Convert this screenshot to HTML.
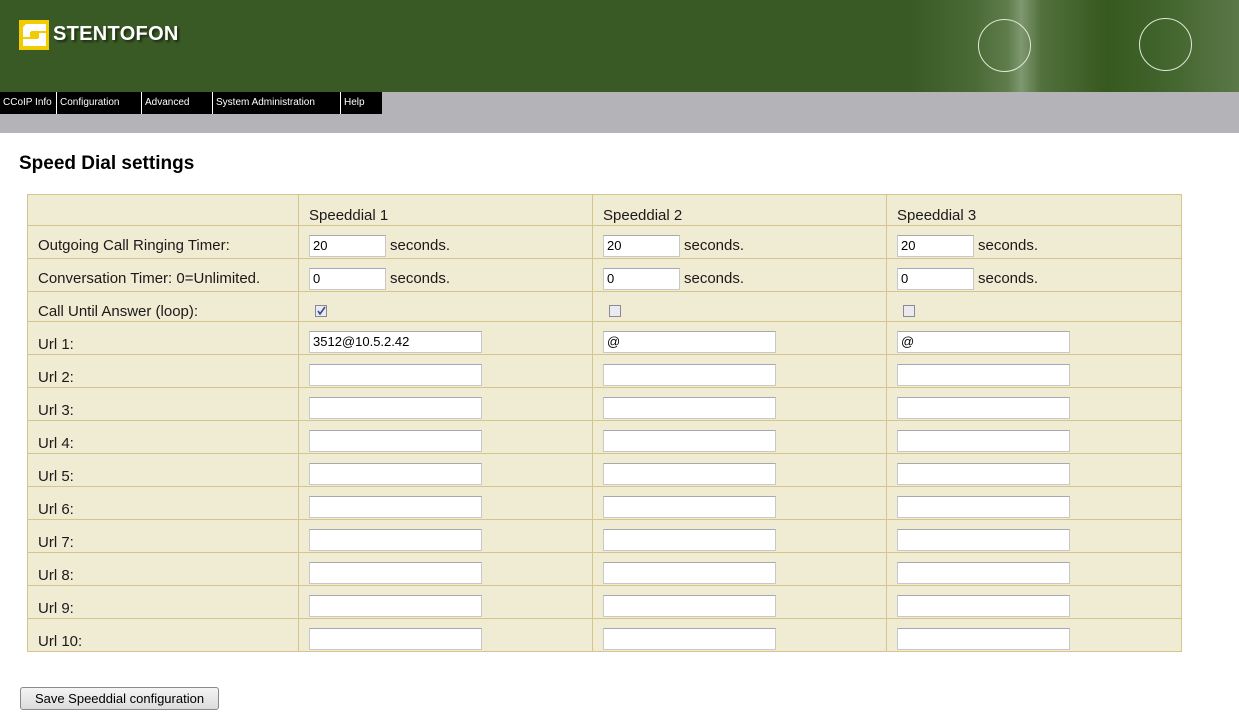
<!DOCTYPE html>
<html><head><style>
*{box-sizing:border-box}
body{margin:0;width:1239px;height:718px;position:relative;background:#fff;font-family:"Liberation Sans",Arial,sans-serif;overflow:hidden}
.hdr{position:absolute;left:0;top:0;width:1239px;height:92px;background:#3a5a25}
.photo{position:absolute;right:0;top:0;width:330px;height:92px;background:linear-gradient(90deg,#3a5a25 0%,#4a6b36 20%,#5f7d4c 30%,#7f9870 34%,#52713d 40%,#36591f 60%,#44662f 80%,#5a7848 100%)}
.circ{position:absolute;border:1.5px solid #dfe8d6;border-radius:50%}
.lt{position:absolute;left:53px;top:23px;color:#fff;font-weight:bold;font-size:20px;text-shadow:2px 2px 2px #1d2d12;letter-spacing:0.3px}
.nav{position:absolute;left:0;top:92px;width:1239px;height:41px;background:#b4b4b8}
.nav a{position:absolute;top:0;height:22px;background:#000;color:#fff;font-size:10px;line-height:22px;padding-left:3px;border-right:1px solid #fff;white-space:nowrap;overflow:hidden}
h1{position:absolute;left:19px;top:153px;margin:0;font-size:19px;font-weight:bold;color:#000}
.tbl{position:absolute;left:27px;top:194px;width:1155px;height:458px;background:#f0ebd3;border:1px solid #d6c48c}
.h{position:absolute;left:0;width:1153px;height:1px;background:#d6c48c}
.v{position:absolute;top:0;width:1px;height:456px;background:#d6c48c}
.t{position:absolute;font-size:15px;color:#1a1a1a;white-space:nowrap}
.in{position:absolute;background:#fff;border:1px solid #c8c8c8;border-top-color:#a8a8b0;font-size:13px;padding-left:3px;line-height:19px;color:#000}
.cb{position:absolute;width:12px;height:12px;border:1px solid #8a8a96;background:#eaeaf0}
.btn{position:absolute;left:20px;top:687px;width:199px;height:23px;border:1px solid #8a8a8a;border-radius:3px;background:linear-gradient(#f4f4f4,#dcdcdc);font-size:13px;line-height:21px;text-align:center;color:#000}
</style></head><body>
<div class="hdr">
 <div class="photo">
  <div class="circ" style="left:69px;top:19px;width:53px;height:53px"></div>
  <div class="circ" style="left:230px;top:18px;width:53px;height:53px"></div>
 </div>
 <svg style="position:absolute;left:19px;top:20px" width="30" height="30"><rect width="30" height="30" fill="#f2cc00"/><path d="M7 4 H27 V11 H12 V13 H27 V26 H4 V19 H19 V17 H4 V7 Z" fill="#fff"/><rect x="11" y="12" width="9" height="6" fill="#f2cc00"/></svg>
 <div class="lt">STENTOFON</div>
</div>
<div class="nav">
 <a style="left:0;width:57px">CCoIP Info</a>
 <a style="left:57px;width:85px">Configuration</a>
 <a style="left:142px;width:71px">Advanced</a>
 <a style="left:213px;width:128px">System Administration</a>
 <a style="left:341px;width:41px;border-right:0">Help</a>
</div>
<h1>Speed Dial settings</h1>
<div class="tbl">
 <div class="v" style="left:270px"></div><div class="v" style="left:564px"></div><div class="v" style="left:858px"></div>
 <div class="h" style="top:30px"></div><div class="h" style="top:63px"></div><div class="h" style="top:96px"></div><div class="h" style="top:126px"></div>
 <div class="h" style="top:159px"></div><div class="h" style="top:192px"></div><div class="h" style="top:225px"></div><div class="h" style="top:258px"></div><div class="h" style="top:291px"></div><div class="h" style="top:324px"></div><div class="h" style="top:357px"></div><div class="h" style="top:390px"></div><div class="h" style="top:423px"></div>
</div>
<div id="c"></div>
<div class="btn">Save Speeddial configuration</div>
<script>
var h='';
var labels=['Outgoing Call Ringing Timer:','Conversation Timer: 0=Unlimited.','Call Until Answer (loop):'];
var tops=[237,270,303];
for(var i=0;i<3;i++)h+='<div class="t" style="left:38px;top:'+tops[i]+'px">'+labels[i]+'</div>';
for(var i=1;i<=10;i++)h+='<div class="t" style="left:38px;top:'+(336+(i-1)*33)+'px">Url '+i+':</div>';
var cx=[309,603,897];
for(var c=0;c<3;c++){
 var x=cx[c];
 h+='<div class="t" style="left:'+x+'px;top:207px">Speeddial '+(c+1)+'</div>';
 h+='<div class="in" style="left:'+x+'px;top:235px;width:77px;height:22px">20</div><div class="t" style="left:'+(x+81)+'px;top:237px">seconds.</div>';
 h+='<div class="in" style="left:'+x+'px;top:268px;width:77px;height:22px">0</div><div class="t" style="left:'+(x+81)+'px;top:270px">seconds.</div>';
 h+='<div class="cb" style="left:'+(x+6)+'px;top:305px">'+(c==0?'<svg width="10" height="10" style="position:absolute;left:0;top:0"><path d="M2 5 L4 8 L9 1" stroke="#3a4a8a" stroke-width="1.6" fill="none"/></svg>':'')+'</div>';
 for(var i=1;i<=10;i++){
  var v=(i==1)?(c==0?'3512@10.5.2.42':'@'):'';
  h+='<div class="in" style="left:'+x+'px;top:'+(331+(i-1)*33)+'px;width:173px;height:22px">'+v+'</div>';
 }
}
document.getElementById('c').innerHTML=h;
</script>
</body></html>
